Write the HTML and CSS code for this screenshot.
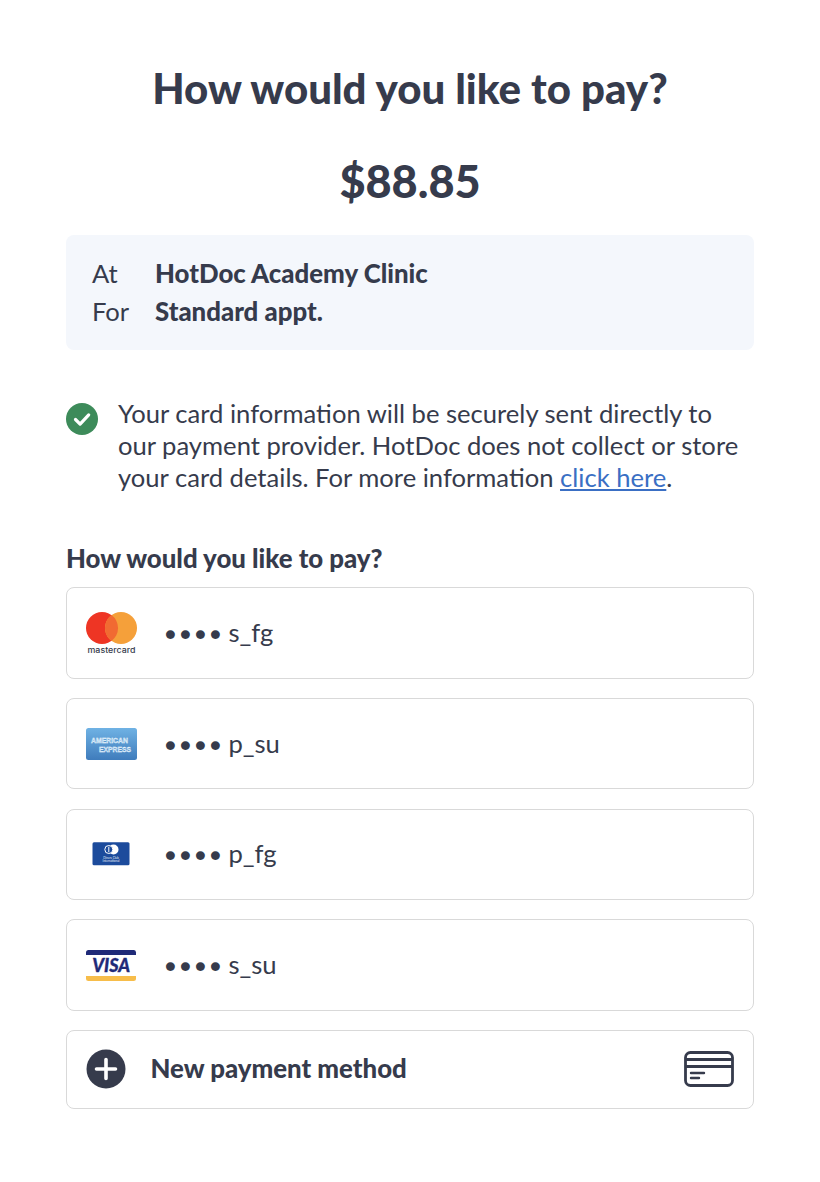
FILE: index.html
```html
<!DOCTYPE html>
<html lang="en">
<head>
<meta charset="utf-8">
<title>How would you like to pay?</title>
<link rel="stylesheet" href="styles.css">
</head>
<body>
<main class="page">
  <h1 class="title">How would you like to pay?</h1>
  <div class="amount">$88.85</div>
  <section class="summary">
    <div class="summary-row"><span class="summary-label">At</span><strong>HotDoc Academy Clinic</strong></div>
    <div class="summary-row"><span class="summary-label">For</span><strong>Standard appt.</strong></div>
  </section>
  <section class="notice">
    <svg class="notice-icon" viewBox="0 0 32 32" aria-hidden="true">
      <circle cx="16" cy="16" r="16" fill="#3d8b5a"/>
      <path d="M9.500 16.500l4.600 4.600 8.600-9.200" fill="none" stroke="#fff" stroke-width="3.200" stroke-linecap="round" stroke-linejoin="round"/>
    </svg>
    <p class="notice-text">Your card information will be securely sent directly to our payment provider. HotDoc does not collect or store your card details. For more information <a href="#">click here</a>.</p>
  </section>
  <h2 class="subtitle">How would you like to pay?</h2>
  <div class="cards">
    <div class="card">
      <svg class="logo logo-mc" viewBox="0 0 51 42" aria-hidden="true">
        <circle cx="16" cy="16" r="16" fill="#ee3524"/>
        <circle cx="35" cy="16" r="16" fill="#f5a03a"/>
        <path d="M25.500 3.100a16 16 0 0 1 0 25.800a16 16 0 0 1 0-25.800z" fill="#f16a32"/>
        <text class="mc-text" x="25.500" y="41" text-anchor="middle" textLength="48" lengthAdjust="spacingAndGlyphs">mastercard</text>
      </svg>
      <span class="mask">&#9679;&#9679;&#9679;&#9679;</span><span class="suffix">s_fg</span>
    </div>
    <div class="card">
      <svg class="logo" viewBox="0 0 51 32" aria-hidden="true">
        <defs><linearGradient id="amex" x1="0" y1="0" x2="0" y2="1"><stop offset="0" stop-color="#6fb2e4"/><stop offset="1" stop-color="#3f7cbc"/></linearGradient></defs>
        <rect width="51" height="32" rx="2.500" fill="url(#amex)"/>
        <text class="amex-text" x="5" y="15" textLength="37" lengthAdjust="spacingAndGlyphs">AMERICAN</text>
        <text class="amex-text" x="13" y="23.700" textLength="32" lengthAdjust="spacingAndGlyphs">EXPRESS</text>
      </svg>
      <span class="mask">&#9679;&#9679;&#9679;&#9679;</span><span class="suffix">p_su</span>
    </div>
    <div class="card">
      <svg class="logo" viewBox="0 0 51 32" aria-hidden="true">
        <rect x="6.500" y="4.200" width="37" height="23" rx="1.500" fill="#1c4b9c"/>
        <circle cx="27.500" cy="11.500" r="5" fill="#fff"/>
        <circle cx="22.800" cy="11.500" r="4" fill="#1c4b9c" stroke="#fff" stroke-width="1"/>
        <path d="M22.800 8.800v5.400" stroke="#fff" stroke-width="1"/>
        <text class="diners-text" x="25" y="20.500">Diners Club</text>
        <text class="diners-text" x="25" y="24.300">International</text>
      </svg>
      <span class="mask">&#9679;&#9679;&#9679;&#9679;</span><span class="suffix">p_fg</span>
    </div>
    <div class="card">
      <svg class="logo" viewBox="0 0 51 32" aria-hidden="true">
        <path d="M0 3.500q0-2.500 2.500-2.500h45.500q2 0 2 2.500v2.500H0z" fill="#1f2a78"/>
        <path d="M0 27h50v2.500q0 2.500-2.500 2.500H2.500q-2.500 0-2.500-2.500z" fill="#f7bd4a"/>
        <text class="visa-text" x="25.200" y="22.700">VISA</text>
      </svg>
      <span class="mask">&#9679;&#9679;&#9679;&#9679;</span><span class="suffix">s_su</span>
    </div>
    <div class="card card-new">
      <svg class="plus" viewBox="0 0 40 40" aria-hidden="true">
        <circle cx="20" cy="20" r="19.500" fill="#363b4c"/>
        <path d="M20 10.500v19M10.500 20h19" stroke="#fff" stroke-width="3.600" stroke-linecap="round"/>
      </svg>
      <span class="new-label">New payment method</span>
      <svg class="card-icon" viewBox="0 0 50 36" aria-hidden="true">
        <rect x="1.500" y="1.500" width="47" height="33" rx="5" fill="none" stroke="#363b4c" stroke-width="2.800"/>
        <path d="M1.500 8.500h47M1.500 15.500h47" stroke="#363b4c" stroke-width="3"/>
        <path d="M7 22h13M7 27h8" stroke="#363b4c" stroke-width="2.400" stroke-linecap="round"/>
      </svg>
    </div>
  </div>
</main>
</body>
</html>
```
FILE: styles.css
```css
* { box-sizing: border-box; }
html, body { margin: 0; padding: 0; background: #fff; }
body {
  font-family: "Lato", "Liberation Sans", sans-serif;
  color: #363b4c;
}
.page {
  display: flex;
  flex-direction: column;
  padding: 63px 66px 0;
}
.title {
  margin: 0;
  font-size: 42px;
  line-height: 50px;
  font-weight: 900;
  text-align: center;
}
.amount {
  margin-top: 43px;
  font-size: 45px;
  line-height: 50px;
  font-weight: 900;
  text-align: center;
}
.summary {
  margin-top: 29px;
  padding: 19px 24px 18px 26px;
  height: 115px;
  background: #f4f7fc;
  border-radius: 8px;
  font-size: 25.600px;
  line-height: 38.400px;
}
.summary-row { display: flex; }
.summary-label { width: 63px; }
.summary-row strong { font-size: 25.800px; font-weight: 900; }
.notice {
  display: flex;
  gap: 20px;
  margin-top: 47px;
}
.notice-icon { flex: none; width: 32px; height: 32px; margin-top: 6px; }
.notice-text {
  margin: 0;
  font-size: 25.600px;
  line-height: 32px;
}
.notice-text a { color: #3a6fc4; }
.subtitle {
  margin: 49px 0 0;
  font-size: 25.800px;
  line-height: 32px;
  font-weight: 900;
}
.cards {
  display: flex;
  flex-direction: column;
  gap: 19.200px;
  margin-top: 13.200px;
}
.card {
  display: flex;
  align-items: center;
  height: 91.550px;
  padding: 0 19px;
  background: #fff;
  border: 1px solid #d9d9d9;
  border-radius: 8px;
  font-size: 25.600px;
}
.logo { flex: none; width: 51px; height: auto; margin-right: 28px; }
.mask { font-size: 18px; letter-spacing: 4.200px; margin-right: 3.400px; }
.suffix { margin-bottom: 2px; }
.mc-text { font: 500 8px "Inter", sans-serif; fill: #363b4c; }
.amex-text { font: 700 7px "Liberation Sans", sans-serif; fill: #a5d0ee; stroke: #fff; stroke-width: 0.300px; }
.diners-text { font: 400 3px "Lato", sans-serif; fill: #e8eef8; text-anchor: middle; }
.visa-text { font: italic 900 18px "Lato", sans-serif; fill: #1f2a78; stroke: #1f2a78; stroke-width: 0.300px; text-anchor: middle; }
.card-new { height: 78.600px; }
.plus { flex: none; width: 40px; height: 40px; margin-right: 24.500px; }
.new-label { flex: 1; font-size: 25.800px; font-weight: 900; margin-bottom: 2px; }
.card-icon { flex: none; width: 50px; height: 36px; }
```
